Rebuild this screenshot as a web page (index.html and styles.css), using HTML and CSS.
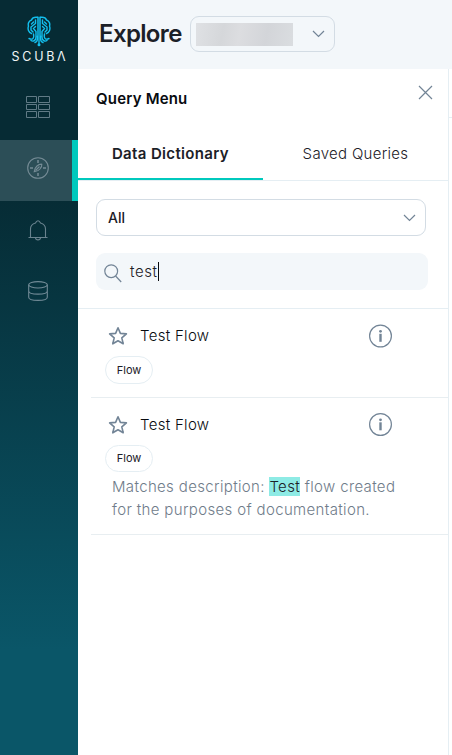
FILE: index.html
```html
<!DOCTYPE html>
<html lang="en">
<head>
<meta charset="utf-8">
<title>Explore</title>
<link rel="stylesheet" href="styles.css">
</head>
<body>
<div class="app">
  <aside class="sidebar">
    <div class="brand">
      <svg class="brand-mark" width="24" height="31" viewBox="0 0 24 31" fill="none" stroke="#13bfee" stroke-width="1.4" stroke-linecap="round">
        <path d="M11 1.2v18M13 1.2v18" stroke-width="1.5"/>
        <path d="M10.5 1.3C7 .8 5.200 2 4.500 4 1.500 5 .8 8 1.500 10 .4 13 1.500 16.500 4.500 17.500"/>
        <path d="M13.500 1.300C17 .8 18.800 2 19.500 4c3 1 3.700 4 3 6 1.100 3 0 6.500-3 7.500"/>
        <path d="M8.500 4v3.500L4 11v3l2 2M8.500 10.500 6.500 12.500l2.500 3V21c0 3.500-3 5-5 3.500M6.500 18c1 5-1.500 6-4.500 4.500M10.500 20v2c0 3-1 4-2.500 4.500M4.500 8l2-2"/>
        <path d="M15.500 4v3.500L20 11v3l-2 2M15.500 10.500l2 2-2.500 3V21c0 3.500 3 5 5 3.500M17.500 18c-1 5 1.500 6 4.500 4.500M13.500 20v2c0 3 1 4 2.500 4.500M19.500 8l-2-2"/>
        <path d="M12 20v8"/>
        <circle cx="12" cy="28.800" r=".8" fill="#13bfee"/>
      </svg>
      <div class="brand-name">SCUBΛ</div>
    </div>
    <nav class="nav">
      <a class="nav-item">
        <svg width="24" height="22" viewBox="0 0 24 22" fill="none" stroke="#607a85">
          <path d="M.5.5h10v6H.5zM12.500.5h11v6h-11zM.5 8.500h10v5H.5zM12.500 8.500h11v5h-11zM.5 15.500h10v6H.5zM12.500 15.500h11v6h-11z"/>
        </svg>
      </a>
      <a class="nav-item active">
        <svg width="22" height="22" viewBox="0 0 22 22" fill="none" stroke="#768c96" stroke-width="1.100">
          <circle cx="11" cy="11" r="10.300"/>
          <path d="M11 3v3M11 16v3M3 11h3M16 11h3" stroke-width="1.500"/>
          <path d="M14.800 7.200c.3 3-2.500 7.300-7.600 7.600.3-5 4.600-7.900 7.600-7.600zM8.500 13.500l4-4"/>
        </svg>
      </a>
      <a class="nav-item low">
        <svg width="20" height="21" viewBox="0 0 20 21" fill="none" stroke="#6a838f" stroke-width="1.100" stroke-linejoin="round">
          <path d="M.5 17.500h19M2.500 17.500V9c0-3.500 2.500-5.300 5-6 .6-1.500 1.500-2.200 2.500-2.200s1.900.7 2.500 2.200c2.500.7 5 2.500 5 6v8.500M7.500 17.800c.3 2.800 4.700 2.800 5 0"/>
        </svg>
      </a>
      <a class="nav-item low">
        <svg width="20" height="20" viewBox="0 0 20 20" fill="none" stroke="#718a96" stroke-width="1.100">
          <ellipse cx="10" cy="3.800" rx="9.300" ry="3.200"/>
          <path d="M.7 3.800v12.400c0 4.200 18.600 4.200 18.600 0V3.800M.7 10c0 4.200 18.600 4.200 18.600 0"/>
        </svg>
      </a>
    </nav>
  </aside>

  <div class="main">
    <header class="header">
      <h1>Explore</h1>
      <div class="project-select">
        <span class="redacted"></span>
        <svg width="13" height="8" viewBox="0 0 13 8" fill="none" stroke="#728496" stroke-width="1.200"><path d="M1 1l5.500 5.500L12 1"/></svg>
      </div>
    </header>

    <div class="content">
      <section class="panel">
        <div class="panel-head">
          <h2>Query Menu</h2>
          <svg class="close" width="15" height="15" viewBox="0 0 15 15" fill="none" stroke="#728496" stroke-width="1.200"><path d="M1 1l13 13M14 1L1 14"/></svg>
        </div>
        <div class="tabs">
          <div class="tab selected">Data Dictionary</div>
          <div class="tab">Saved Queries</div>
        </div>
        <div class="filters">
          <div class="type-select">
            <span>All</span>
            <svg width="13" height="8" viewBox="0 0 13 8" fill="none" stroke="#728496" stroke-width="1.200"><path d="M1 1l5.500 5.500L12 1"/></svg>
          </div>
          <div class="search">
            <svg width="18" height="19" viewBox="0 0 18 19" fill="none" stroke="#728496" stroke-width="1.200"><circle cx="7.200" cy="7.200" r="6.400"/><path d="M11.600 12l5.600 6"/></svg>
            <span class="query">test</span><span class="caret"></span>
          </div>
        </div>
        <div class="results">
          <article class="result">
            <div class="result-title">
              <svg class="star" width="20" height="20" viewBox="0 0 20 20" fill="none" stroke="#728496" stroke-width="1.600" stroke-linejoin="round"><path d="M10 1.800l2.400 5.600 6 .5-4.600 4 1.400 5.900L10 14.700l-5.200 3.100 1.400-5.900-4.600-4 6-.5z"/></svg>
              <span class="name">Test Flow</span>
              <svg class="info" width="23" height="24" viewBox="0 0 23 24"><circle cx="11.500" cy="12" r="10.900" fill="none" stroke="#728496" stroke-width="1.200"/><circle cx="11.500" cy="7.300" r="1.400" fill="#728496"/><path d="M11.500 9.800v8" stroke="#728496" stroke-width="2.400"/></svg>
            </div>
            <span class="tag">Flow</span>
          </article>
          <article class="result described">
            <div class="result-title">
              <svg class="star" width="20" height="20" viewBox="0 0 20 20" fill="none" stroke="#728496" stroke-width="1.600" stroke-linejoin="round"><path d="M10 1.800l2.400 5.600 6 .5-4.600 4 1.400 5.900L10 14.700l-5.200 3.100 1.400-5.900-4.600-4 6-.5z"/></svg>
              <span class="name">Test Flow</span>
              <svg class="info" width="23" height="24" viewBox="0 0 23 24"><circle cx="11.500" cy="11.500" r="10.900" fill="none" stroke="#728496" stroke-width="1.200"/><circle cx="11.500" cy="6.800" r="1.400" fill="#728496"/><path d="M11.500 9.300v8" stroke="#728496" stroke-width="2.400"/></svg>
            </div>
            <span class="tag">Flow</span>
            <p class="match">Matches description: <mark>Test</mark> flow created<br>for the purposes of documentation.</p>
          </article>
        </div>
      </section>
      <div class="workspace"><div class="workspace-bar"></div></div>
    </div>
  </div>
</div>
</body>
</html>
```
FILE: styles.css
```css
* { box-sizing: border-box; }
body {
  margin: 0;
  font-family: Inter, "Liberation Sans", sans-serif;
  color: #1b2027;
  background: #fff;
}
svg { display: block; flex: none; }
.app { display: flex; width: 452px; height: 755px; overflow: hidden; }

.sidebar {
  width: 78px;
  flex: none;
  background: linear-gradient(#062b34 0, #062b34 190px, #0a5668 650px, #0a5668 100%);
}
.brand {
  height: 79px;
  padding-top: 16px;
  display: flex;
  flex-direction: column;
  align-items: center;
}
.brand-name {
  margin-top: 1px;
  padding-left: 2px;
  font-family: Inter, sans-serif;
  font-size: 12.5px;
  line-height: 18px;
  letter-spacing: 2.7px;
  color: #f0f5f6;
}
.nav-item {
  display: flex;
  align-items: center;
  justify-content: center;
  height: 61px;
  padding-right: 2px;
  padding-bottom: 5px;
}
.nav-item.active {
  background: #2c4e57;
  border-right: 6px solid #00c9bd;
  padding: 0 0 5px 4px;
}
.nav-item.low { padding-bottom: 3px; }

.main { flex: 1; min-width: 0; display: flex; flex-direction: column; }
.header {
  height: 69px;
  flex: none;
  display: flex;
  align-items: center;
  padding: 0 0 1px 21px;
  background: #f3f7fa;
}
h1 { margin: 0; width: 91px; font-size: 24px; font-weight: 580; line-height: 34px; letter-spacing: -.65px; }
.project-select {
  display: flex;
  align-items: center;
  justify-content: space-between;
  width: 145px;
  height: 36px;
  padding: 0 9px 0 5px;
  border: 1px solid #d3dce4;
  border-radius: 9px;
}
.redacted {
  width: 97px;
  height: 23px;
  background: linear-gradient(100deg, #dfe1e4, #d5d7da 28%, #dcdde0 45%, #d3d5d9 72%, #dadde0);
}

.content { flex: 1; display: flex; min-height: 0; }
.panel { width: 371px; flex: none; border-right: 1px solid #e5eef3; }
.panel-head {
  height: 59px;
  display: flex;
  justify-content: space-between;
  padding: 16px 15px 0 18px;
}
h2 { margin: 0; font-size: 15px; line-height: 28px; font-weight: 600; letter-spacing: .2px; color: #080b10; }
.tabs { display: flex; height: 53px; border-bottom: 1px solid #e5eef3; }
.tab {
  width: 185px;
  height: 52px;
  text-align: center;
  font-size: 15px;
  font-weight: 300;
  line-height: 52px;
  letter-spacing: .3px;
}
.tab.selected { font-weight: 600; letter-spacing: .35px; border-bottom: 2px solid #00c9bd; }
.filters {
  height: 128px;
  padding: 18px 20px 0 18px;
  border-bottom: 1px solid #e5eef3;
}
.type-select {
  display: flex;
  justify-content: space-between;
  align-items: center;
  width: 330px;
  height: 37px;
  padding: 0 9px 0 11px;
  border: 1px solid #d3dce4;
  border-radius: 9px;
  font-size: 14px;
  font-weight: 550;
}
.search {
  display: flex;
  align-items: center;
  width: 332px;
  height: 37px;
  margin-top: 17px;
  padding-left: 8px;
  border-radius: 9px;
  background: #f3f7fa;
}
.search svg { margin-top: 3px; }
.query { margin-left: 8px; font-size: 15px; font-weight: 300; letter-spacing: .6px; }
.caret { width: 1px; height: 19px; background: #080b10; }

.result {
  height: 89px;
  margin-left: 13px;
  padding: 15px 0 0 14px;
  border-bottom: 1px solid #e8eef1;
}
.result.described { height: 137px; }
.result-title { display: flex; align-items: center; height: 24px; padding: 0 56px 0 3px; }
.name { margin: 0 0 2px 12px; font-size: 15px; font-weight: 300; letter-spacing: .3px; color: #080b10; }
.info { margin-left: auto; }
.described .star { margin-bottom: 1px; }
.tag {
  display: block;
  width: 48px;
  height: 28px;
  margin-top: 8px;
  border: 1px solid #e5eef3;
  border-radius: 14px;
  text-align: center;
  font-size: 11px;
  font-weight: 400;
  line-height: 26px;
}
.described .tag { height: 27px; line-height: 25px; }
.match { margin: 3px 0 0 7px; font-size: 15px; font-weight: 300; line-height: 23px; letter-spacing: .35px; color: #6f7c8a; }
mark { background: #8eebe5; color: #1b2027; }

.workspace { flex: 1; }
.workspace-bar { height: 49px; border-bottom: 1px solid #e5eef3; }
```
